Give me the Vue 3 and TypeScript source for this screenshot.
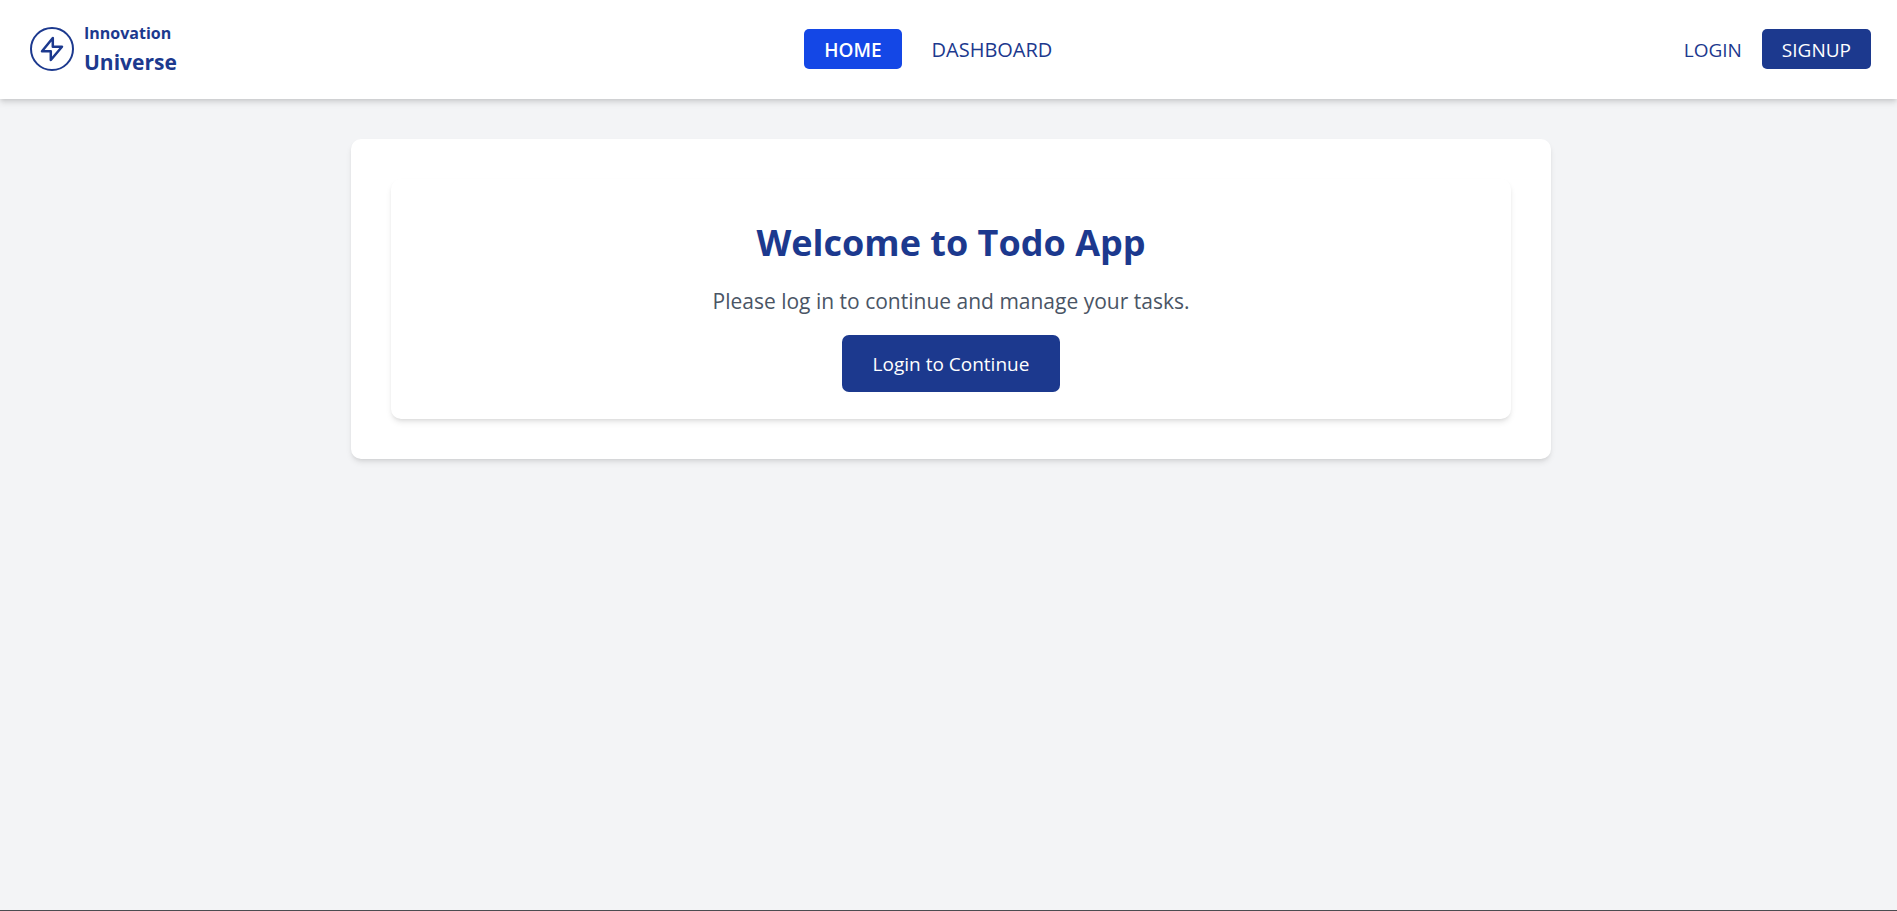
<script setup lang="ts">
interface NavLink {
  label: string
  href: string
  variant: string
}

const mainLinks: NavLink[] = [
  { label: 'HOME', href: '#home', variant: 'active' },
  { label: 'DASHBOARD', href: '#dashboard', variant: 'plain' },
]
</script>

<template>
  <div class="page">
    <header class="header">
      <a class="brand" href="#home">
        <svg class="logo" viewBox="0 0 44 44" fill="none" stroke="currentColor" aria-hidden="true">
          <circle cx="22" cy="22" r="21" stroke-width="2" />
          <path d="M22.800 11 L12 24.300 L20.800 24.300 L20.800 33 L32 19.700 L22.800 19.700 Z" stroke-width="2.500" stroke-linejoin="round" />
        </svg>
        <span class="brand-text">
          <span class="brand-top">Innovation</span>
          <span class="brand-bottom">Universe</span>
        </span>
      </a>
      <nav class="nav" aria-label="Main">
        <a v-for="link in mainLinks" :key="link.label" :href="link.href" class="link" :class="link.variant">{{ link.label }}</a>
      </nav>
      <div class="account">
        <a class="link plain" href="#login">LOGIN</a>
        <a class="link signup" href="#signup">SIGNUP</a>
      </div>
    </header>
    <main class="main">
      <div class="card outer">
        <section class="card inner">
          <h1 class="title">Welcome to Todo App</h1>
          <p class="lead">Please log in to continue and manage your tasks.</p>
          <button class="cta" type="button">Login to Continue</button>
        </section>
      </div>
    </main>
  </div>
</template>

<style>
body {
  background: #f3f4f6;
}
</style>

<style scoped>
.page {
  box-sizing: border-box;
  min-height: 100vh;
  background: #f3f4f6;
  border-bottom: 1px solid #4b4c50;
  color: #1c398e;
  font-family: "Segoe UI", "Open Sans", "Noto Sans", sans-serif;
}
.header {
  display: flex;
  align-items: center;
  justify-content: space-between;
  box-sizing: border-box;
  min-height: 99px;
  padding: 0 26px 1px 30px;
  background: #fff;
  box-shadow: 0 4px 6px rgba(0, 0, 0, 0.1), 0 2px 4px -1px rgba(0, 0, 0, 0.1);
}
.brand {
  display: flex;
  align-items: center;
  gap: 10px;
  padding-right: 36px;
  color: inherit;
  text-decoration: none;
}
.logo {
  width: 44px;
  height: 44px;
}
.brand-text {
  display: flex;
  flex-direction: column;
  padding-bottom: 2px;
  font-weight: 700;
  line-height: 29px;
}
.brand-top {
  font-size: 16px;
}
.brand-bottom {
  font-size: 21px;
}
.nav {
  display: flex;
  gap: 10px;
}
.nav .plain {
  font-size: 20px;
}
.account {
  display: flex;
}
.link {
  padding: 7px 20px 5px;
  border-radius: 5px;
  font-size: 19px;
  line-height: 28px;
  font-weight: 500;
  text-decoration: none;
}
.plain {
  color: #1c398e;
}
.active {
  background: #1447e6;
  color: #fff;
  font-weight: 600;
}
.signup {
  background: #1c398e;
  color: #fff;
}
.main {
  padding: 40px 32px 40px 37px;
}
.card {
  background: #fff;
  border-radius: 10px;
  box-shadow: 0 4px 6px -1px rgba(0, 0, 0, 0.1), 0 2px 4px -2px rgba(0, 0, 0, 0.1);
}
.outer {
  box-sizing: border-box;
  max-width: 1200px;
  margin: 0 auto;
  padding: 40px;
}
.inner {
  display: flex;
  flex-direction: column;
  align-items: center;
  padding: 40px 32px 27px;
  text-align: center;
}
.title {
  margin: 0 0 16px;
  font-size: 36px;
  line-height: 48px;
  font-weight: 700;
}
.lead {
  margin: 0 0 16px;
  color: #4a5565;
  font-size: 21px;
  line-height: 36px;
}
.cta {
  padding: 15px 31px 13px;
  border: 0;
  border-radius: 7px;
  background: #1c398e;
  color: #fff;
  font-family: inherit;
  font-size: 19px;
  line-height: 29px;
}
</style>
